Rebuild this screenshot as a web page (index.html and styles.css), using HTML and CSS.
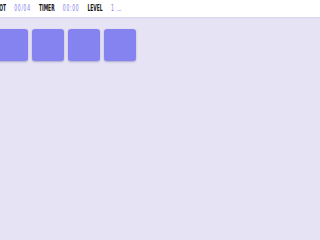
FILE: index.html
```html
<!DOCTYPE html>
<html>
<head>
<meta charset="utf-8">
<link rel="stylesheet" href="styles.css">
</head>
<body>
<div class="app">
  <header class="hud">
    <div class="hud-inner">
      <div class="stat stat-shot"><span class="label">SHOT</span><span class="value">00/04</span></div>
      <div class="stat"><span class="label">TIMER</span><span class="value">00:00</span></div>
      <div class="stat"><span class="label">LEVEL</span><span class="value level">1 - Beginner</span></div>
    </div>
  </header>
  <main class="board">
    <div class="card"></div>
    <div class="card"></div>
    <div class="card"></div>
    <div class="card"></div>
  </main>
</div>
</body>
</html>
```
FILE: styles.css
```css
html, body {
  margin: 0;
  padding: 0;
  height: 100%;
  overflow: hidden;
  background: #e5e3f4;
}
.app {
  display: flex;
  flex-direction: column;
}
.hud {
  height: 17px;
  background: #ffffff;
  display: flex;
  align-items: center;
  overflow: hidden;
  box-shadow: 0 1px 1px rgba(60,50,140,0.06);
}
.hud-inner {
  display: flex;
  align-items: center;
  gap: 15px;
  white-space: nowrap;
  font-family: "DejaVu Sans Condensed", "DejaVu Sans", sans-serif;
  font-weight: bold;
  font-size: 9px;
  line-height: 1;
  transform: scaleX(0.55);
  transform-origin: left center;
}
.stat {
  display: flex;
  gap: 15px;
  flex-shrink: 0;
}
.stat-shot {
  margin-left: -14px;
}
.label {
  color: #141414;
}
.value {
  color: #7c79ec;
  font-weight: normal;
  letter-spacing: 1.3px;
}
.level {
  display: inline-block;
  width: 20px;
  overflow: hidden;
  text-overflow: ellipsis;
}
.board {
  display: flex;
  gap: 4px;
  margin-left: -4px;
  margin-top: 12px;
}
.card {
  width: 32px;
  height: 32px;
  flex-shrink: 0;
  background: #8583ef;
  border-radius: 3px;
  box-shadow: 0 1px 2px rgba(40,30,120,0.3);
}
```
